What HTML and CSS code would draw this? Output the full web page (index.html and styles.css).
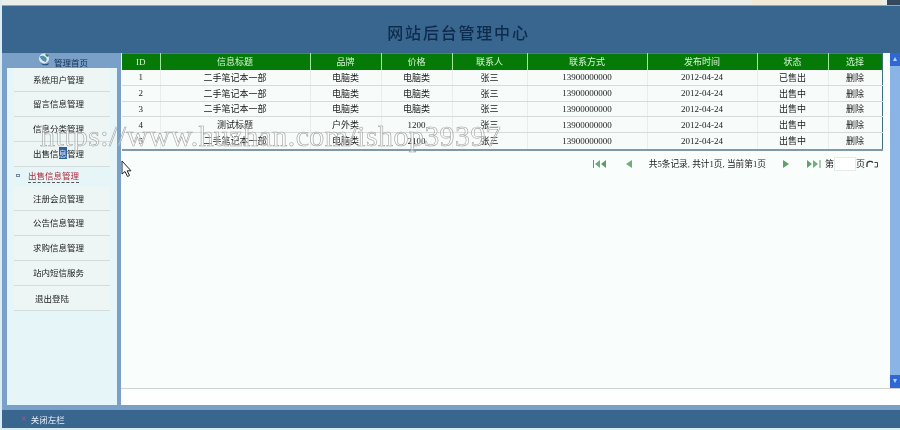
FILE: index.html
```html
<!DOCTYPE html>
<html lang="en">
<head>
  <meta charset="UTF-8">
  <title>网站后台管理中心</title>
  <link rel="stylesheet" href="styles.css">
</head>
<body>
  <div class="page">
    <!-- browser strip above the frames -->
    <div class="top-strip">
      <span class="strip-tan"></span>
      <span class="strip-dark"></span>
    </div>

    <div class="header">
      <h1>网站后台管理中心</h1>
    </div>

    <div class="middle">
      <!-- left menu -->
      <div class="sidebar">
        <div class="side-head">
          <svg class="globe" width="14" height="13" viewBox="0 0 14 13">
            <circle cx="7" cy="5.500" r="5" fill="#dfeaf2"/>
            <path d="M2.500 3.500C5 2 7 2.500 9 4.500 10 5.800 10 7.500 8.500 9 6 8.500 4 6.500 2.500 3.500Z" fill="#4f8fb0"/>
            <path d="M8 1.500C9.500 1 11 1.500 12 3L10 4Z" fill="#3c7a58"/>
            <path d="M3 9.500C5 11.500 9 11.800 12 10L11 12C8 12.800 5 12.300 3 9.500Z" fill="#1f4f7a"/>
          </svg>
          <span>管理首页</span>
        </div>
        <ul class="menu">
          <li class="item first">系统用户管理</li>
          <li class="item">留言信息管理</li>
          <li class="item">信息分类管理</li>
          <li class="item">出售信<span class="selected">息</span>管理</li>
          <li class="item active"><i class="bullet"></i><span class="active-text">出售信息管理</span></li>
          <li class="item after-active">注册会员管理</li>
          <li class="item">公告信息管理</li>
          <li class="item">求购信息管理</li>
          <li class="item">站内短信服务</li>
          <li class="item logout">退出登陆</li>
        </ul>
      </div>

      <div class="main">
        <div class="frame">
          <div class="content">
            <table class="grid">
              <thead>
                <tr>
                  <th class="c-id">ID</th>
                  <th class="c-title">信息标题</th>
                  <th class="c-brand">品牌</th>
                  <th class="c-price">价格</th>
                  <th class="c-person">联系人</th>
                  <th class="c-phone">联系方式</th>
                  <th class="c-date">发布时间</th>
                  <th class="c-state">状态</th>
                  <th class="c-pick">选择</th>
                </tr>
              </thead>
              <tbody>
                <tr><td>1</td><td>二手笔记本一部</td><td>电脑类</td><td>电脑类</td><td>张三</td><td>13900000000</td><td>2012-04-24</td><td>已售出</td><td>删除</td></tr>
                <tr><td>2</td><td>二手笔记本一部</td><td>电脑类</td><td>电脑类</td><td>张三</td><td>13900000000</td><td>2012-04-24</td><td>出售中</td><td>删除</td></tr>
                <tr><td>3</td><td>二手笔记本一部</td><td>电脑类</td><td>电脑类</td><td>张三</td><td>13900000000</td><td>2012-04-24</td><td>出售中</td><td>删除</td></tr>
                <tr><td>4</td><td>测试标题</td><td>户外类</td><td>1200</td><td>张三</td><td>13900000000</td><td>2012-04-24</td><td>出售中</td><td>删除</td></tr>
                <tr><td>5</td><td>二手笔记本一部</td><td>电脑类</td><td>2100</td><td>张三</td><td>13900000000</td><td>2012-04-24</td><td>出售中</td><td>删除</td></tr>
              </tbody>
            </table>

            <div class="pager">
              <svg class="pg-icon" width="14" height="8" viewBox="0 0 14 8"><path d="M0.500 0V8" stroke="#6f8f78"/><path d="M7 0V8L2 4Z" fill="#6fae7c"/><path d="M13 0V8L8 4Z" fill="#5f9a6c"/></svg>
              <svg class="pg-icon gap-prev" width="8" height="8" viewBox="0 0 8 8"><path d="M7 0V8L1 4Z" fill="#6fae7c"/></svg>
              <span class="pg-text">共5条记录, 共计1页, 当前第1页</span>
              <svg class="pg-icon gap-next" width="8" height="8" viewBox="0 0 8 8"><path d="M1 0V8L7 4Z" fill="#5fa06c"/></svg>
              <svg class="pg-icon gap-last" width="14" height="8" viewBox="0 0 14 8"><path d="M0 0V8L5 4Z" fill="#5fa06c"/><path d="M6 0V8L11 4Z" fill="#6fae7c"/><path d="M13 0V8" stroke="#6f8f78"/></svg>
              <span class="pg-label">第</span>
              <span class="pg-input"></span>
              <span class="pg-label">页</span>
              <svg class="pg-go" width="12" height="8" viewBox="0 0 12 8"><path d="M1 7V3.500C1 1.500 5 0.500 7 2.500" fill="none" stroke="#333" stroke-width="1.300"/><path d="M8.500 2.500H11.500V7H8.500" fill="none" stroke="#445" stroke-width="1"/></svg>
            </div>
          </div>

          <div class="scrollbar">
            <span class="sb-btn">▴</span>
            <span class="sb-btn">▾</span>
          </div>
        </div>
        <div class="main-foot"></div>
      </div>
    </div>

    <div class="footer">
      <span class="close-x">×</span>
      <span>关闭左栏</span>
    </div>

    <!-- site watermark over the capture, and the mouse pointer -->
    <div class="watermark">https://www.huzhan.com/ishop39397</div>
    <svg class="pointer" width="12" height="18" viewBox="0 0 12 18">
      <path d="M1 1V14L4 11.500 6.500 16.500 8.500 15.500 6.200 10.800H10Z" fill="#fff" stroke="#222" stroke-width="1"/>
    </svg>
  </div>
</body>
</html>
```

FILE: styles.css
```css
* {
  margin: 0;
  padding: 0;
  box-sizing: border-box;
}

body {
  width: 900px;
  height: 430px;
  overflow: hidden;
  font-family: "Liberation Serif", "Noto Sans CJK SC", serif;
  font-size: 9px;
  color: #1c1c1c;
}

/* the capture is a soft video frame */
.page {
  position: relative;
  display: flex;
  flex-direction: column;
  height: 430px;
  border-left: 2px solid #dcecf4;
  filter: blur(0.3px);
}

/* Top strip */
.top-strip {
  display: flex;
  justify-content: flex-end;
  height: 6px;
  background: #e9eee9;
  border-bottom: 1px solid #8fa6b8;
}

.strip-tan {
  width: 130px;
  background: #efe9d6;
}

.strip-dark {
  width: 13px;
  margin-left: 5px;
  background: #33485c;
}

/* Header */
.header {
  height: 47px;
  padding-top: 18px;
  padding-left: 15px;
  background: #39668f;
  text-align: center;
}

.header h1 {
  font-size: 16px;
  line-height: 20px;
  font-weight: 500;
  letter-spacing: 1.800px;
  color: #0d2b4c;
}

/* Layout */
.middle {
  display: flex;
  flex: 1;
  min-height: 0;
}

.sidebar {
  display: flex;
  flex-direction: column;
  width: 119px;
  padding: 0 4px 0 5px;
  background: #7ba0c8;
}

.side-head {
  display: flex;
  align-items: center;
  height: 15px;
  padding-left: 30px;
  font-size: 8.500px;
  color: #102d52;
}

.side-head .globe {
  margin-right: 3px;
  margin-top: -3px;
}

.side-head span {
  padding-top: 2px;
}

/* Left menu */
.menu {
  flex: 1;
  list-style: none;
  background: #e6f6f8;
}

.item {
  display: flex;
  align-items: center;
  height: 25px;
  margin: 0 7px;
  padding-left: 19px;
  padding-bottom: 2px;
  border-bottom: 1px solid #d3dcdb;
  background: #edf5f5;
  font-size: 8.500px;
}

.item.first {
  height: 24px;
}

.item.active {
  height: 20px;
  padding-left: 2px;
  padding-bottom: 3px;
  border-bottom: none;
  background: none;
}

.item.after-active {
  height: 24px;
}

.item.logout {
  padding-left: 21px;
  padding-bottom: 0;
}

.bullet {
  width: 4px;
  height: 3px;
  margin-right: 8px;
  border: 1px solid #6f8aa0;
}

.active-text {
  padding: 1px 0;
  border-bottom: 1px dashed #555;
  color: #b02a3a;
}

.selected {
  background: #2e5f9f;
  color: #cfe0f2;
}

/* Main frame */
.main {
  display: flex;
  flex: 1;
  flex-direction: column;
  min-width: 0;
  background: #fdfffe;
}

.frame {
  display: flex;
  flex: 1;
  min-height: 0;
}

.content {
  flex: 1;
  padding-left: 1px;
  background: #f9fdfb;
}

.main-foot {
  height: 17px;
  border-top: 1px solid #cfd3cf;
}

.scrollbar {
  display: flex;
  flex-direction: column;
  justify-content: space-between;
  width: 10px;
  background: #8ab3e6;
}

.sb-btn {
  height: 13px;
  background: #2f68d4;
  color: #bcd4f5;
  font-size: 8px;
  line-height: 12px;
  text-align: center;
}

/* Data table */
.grid {
  width: 760px;
  border-collapse: collapse;
  table-layout: fixed;
  border-top: 1px solid #2f8f6f;
  border-right: 1px solid #3f6f78;
  border-bottom: 2px solid #7f9aa6;
  background: #f7fbf9;
}

.grid th {
  height: 16px;
  background: #067a06;
  border-left: 1px solid #9fe8a0;
  color: #d8f5d8;
  font-size: 9px;
  font-weight: normal;
}

.grid th:first-child {
  border-left: none;
}

.grid td {
  height: 15.800px;
  border-left: 1px solid #e8eeea;
  border-bottom: 1px solid #d5dbd8;
  text-align: center;
  font-size: 9px;
}

.grid td:first-child {
  border-left: none;
}

.grid tr:last-child td {
  height: 17px;
  border-bottom: none;
}

.c-id { width: 38px; }
.c-title { width: 150px; }
.c-brand { width: 71px; }
.c-price { width: 71px; }
.c-person { width: 75px; }
.c-phone { width: 120px; }
.c-date { width: 110px; }
.c-state { width: 71px; }
.c-pick { width: 54px; }

/* Pager */
.pager {
  display: flex;
  align-items: center;
  justify-content: flex-end;
  height: 22px;
  margin-top: 2px;
  padding-right: 12px;
}

.pg-text {
  margin-left: 16px;
  font-size: 8.700px;
}

.gap-prev { margin-left: 18px; }
.gap-next { margin-left: 16px; }
.gap-last { margin-left: 17px; }
.pg-label { margin-left: 4px; }

.pg-input {
  width: 22px;
  height: 14px;
  margin-left: 0;
  margin-right: -4px;
  background: #fff;
  border: 1px solid #e6ebe8;
}

.pg-go {
  margin-left: 1px;
}

/* Footer */
.footer {
  display: flex;
  align-items: center;
  height: 25px;
  padding-left: 19px;
  padding-bottom: 1px;
  background: #39668f;
  border-top: 5px solid #7ba0c8;
  border-bottom: 2px solid #dcecf4;
  color: #e8f0f8;
  font-size: 8.500px;
}

.close-x {
  margin-right: 4px;
  color: #c04a78;
  font-size: 10px;
  font-weight: bold;
}

/* Over everything */
.watermark {
  position: absolute;
  top: 118px;
  left: 38px;
  font-family: "Liberation Serif", serif;
  font-size: 30px;
  line-height: 36px;
  letter-spacing: 0.400px;
  white-space: nowrap;
  color: rgba(255, 255, 255, 0.4);
  -webkit-text-stroke: 0.600px #a3a3a3;
}

.pointer {
  position: absolute;
  top: 160px;
  left: 119px;
}
```
